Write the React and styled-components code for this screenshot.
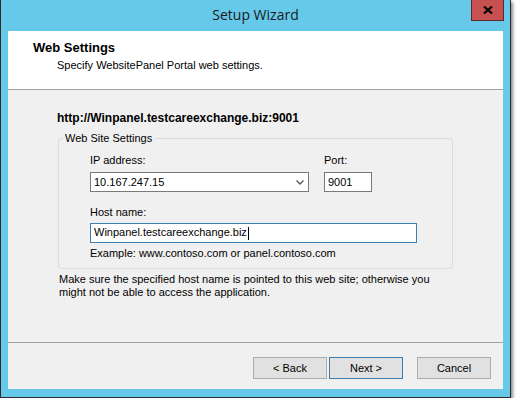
import React from 'react';
import styled, { createGlobalStyle } from 'styled-components';

const Global = createGlobalStyle`
  html, body { margin: 0; padding: 0; background: #ffffff; }
  body { font-family: "Liberation Sans", Arial, sans-serif; font-size: 11px; color: #000; }
  * { box-sizing: border-box; }
`;

const Window = styled.div`
  box-sizing: content-box;
  width: 509px;
  height: 397px;
  border: 1px solid #2b2b2b;
  border-top: none;
  background: #66c9ea;
  box-shadow: 2px 2px 3px rgba(0, 0, 0, 0.45);
  display: flex;
  flex-direction: column;
`;

const TitleBar = styled.div`
  height: 31px;
  flex: none;
  display: grid;
  grid-template-columns: 1fr auto 1fr;
  padding: 0 6px;
`;

const Title = styled.div`
  grid-column: 2;
  font-family: "Open Sans", "Noto Sans", sans-serif;
  font-size: 14px;
  line-height: 30px;
  color: #1a1a1a;
`;

const CloseButton = styled.div`
  grid-column: 3;
  justify-self: end;
  width: 33px;
  height: 21px;
  background: #c75050;
  border: 1px solid #5c2a2a;
  border-top: none;
  display: flex;
  align-items: center;
  justify-content: center;
`;

const Client = styled.div`
  flex: 1;
  margin: 0 7px 8px 7px;
  background: #f0f0f0;
  display: flex;
  flex-direction: column;
`;

const Header = styled.div`
  height: 59px;
  flex: none;
  background: #ffffff;
  border-bottom: 1px solid #a0a0a0;
  padding: 9px 0 0 25px;
`;

const HeaderTitle = styled.div`
  font-weight: bold;
  font-size: 13px;
  line-height: 16px;
`;

const HeaderSub = styled.div`
  margin: 3px 0 0 24px;
  font-size: 11px;
  line-height: 13px;
`;

const Main = styled.div`
  flex: 1;
  padding: 21px 0 0 49px;
  display: flex;
  flex-direction: column;
  border-bottom: 1px solid #a0a0a0;
`;

const Url = styled.div`
  font-weight: bold;
  font-size: 12px;
  line-height: 14px;
`;

const Group = styled.fieldset`
  margin: 7px 0 0 1px;
  width: 395px;
  border: 1px solid #d6dde3;
  border-radius: 3px;
  padding: 9px 0 8px 31px;
  display: grid;
  grid-template-columns: 219px 48px;
  column-gap: 15px;
  align-items: start;
`;

const Legend = styled.legend`
  margin-left: -27px;
  padding: 0 2px;
  font-size: 11px;
  line-height: 13px;
`;

const Label = styled.div`
  font-size: 11px;
  line-height: 13px;
  margin-top: ${p => p.$top || 0}px;
  grid-column: ${p => (p.$span ? '1 / span 2' : 'auto')};
`;

const Box = styled.div`
  height: ${p => p.$h || 20}px;
  margin-top: ${p => p.$top || 0}px;
  background: #fff;
  border: 1px solid ${p => (p.$focus ? '#3c7fb1' : '#7a7a7a')};
  display: flex;
  align-items: center;
  padding-left: 3px;
  font-size: 11px;
  grid-column: ${p => (p.$span ? '1 / span 2' : 'auto')};
  width: ${p => (p.$w ? p.$w + 'px' : 'auto')};
`;

const BoxText = styled.span`
  flex: 1;
  white-space: nowrap;
`;

const Caret = styled.span`
  display: inline-block;
  width: 1px;
  height: 13px;
  background: #000;
  vertical-align: middle;
  margin-left: 1px;
`;

const Chevron = styled.span`
  width: 16px;
  display: flex;
  justify-content: center;
  align-items: center;
`;

const Note = styled.div`
  margin: 4px 0 0 2px;
  font-size: 11px;
  line-height: 13px;
`;

const Footer = styled.div`
  height: 46px;
  flex: none;
  display: flex;
  justify-content: flex-end;
  padding: 14px 12px 0 0;
`;

const Button = styled.div`
  width: 74px;
  height: 22px;
  margin-left: ${p => p.$gap || 0}px;
  background: #e1e1e1;
  border: 1px solid ${p => (p.$default ? '#3c7fb1' : '#adadad')};
  display: flex;
  align-items: center;
  justify-content: center;
  font-size: 11px;
`;

export default function App() {
  return (
    <>
      <Global />
      <Window>
        <TitleBar>
          <Title>Setup Wizard</Title>
          <CloseButton>
            <svg width="10" height="8" viewBox="0 0 10 8">
              <path d="M1 0.5 L9 7.5 M9 0.5 L1 7.5" stroke="#000" strokeWidth="2.2" fill="none" />
            </svg>
          </CloseButton>
        </TitleBar>
        <Client>
          <Header>
            <HeaderTitle>Web Settings</HeaderTitle>
            <HeaderSub>Specify WebsitePanel Portal web settings.</HeaderSub>
          </Header>
          <Main>
            <Url>http://Winpanel.testcareexchange.biz:9001</Url>
            <Group>
              <Legend>Web Site Settings</Legend>
              <Label>IP address:</Label>
              <Label>Port:</Label>
              <Box $top={5}>
                <BoxText>10.167.247.15</BoxText>
                <Chevron>
                  <svg width="8" height="5" viewBox="0 0 8 5">
                    <path d="M0.5 0.5 L4 4 L7.5 0.5" stroke="#555" strokeWidth="1.3" fill="none" />
                  </svg>
                </Chevron>
              </Box>
              <Box $top={5} $h={20}>
                <BoxText>9001</BoxText>
              </Box>
              <Label $span $top={14}>Host name:</Label>
              <Box $span $top={4} $focus $w={327}>
                <BoxText>Winpanel.testcareexchange.biz<Caret /></BoxText>
              </Box>
              <Label $span $top={4}>Example: www.contoso.com or panel.contoso.com</Label>
            </Group>
            <Note>
              Make sure the specified host name is pointed to this web site; otherwise you
              <br />
              might not be able to access the application.
            </Note>
          </Main>
          <Footer>
            <Button>&lt; Back</Button>
            <Button $gap={2} $default>Next &gt;</Button>
            <Button $gap={14}>Cancel</Button>
          </Footer>
        </Client>
      </Window>
    </>
  );
}
